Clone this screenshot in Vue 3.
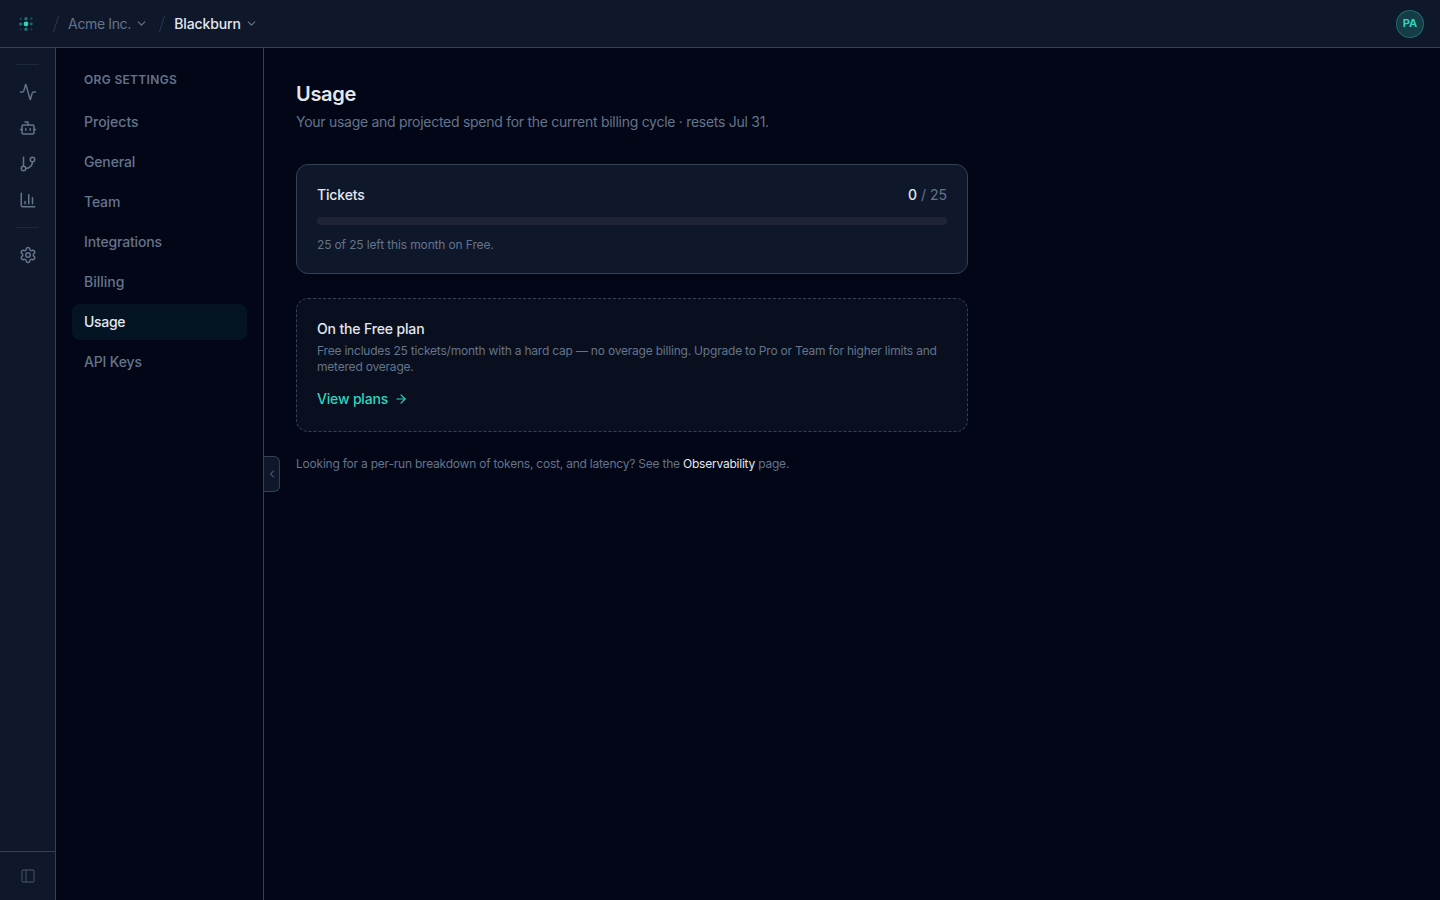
<template>
  <div class="app">
    <header class="topbar">
      <svg class="logo" width="20" height="20" viewBox="0 0 20 20">
        <circle v-for="(dot, i) in dots" :key="i" :cx="dot.x" :cy="dot.y" :r="dot.r" :opacity="dot.o" fill="#2dd4bf" />
      </svg>
      <svg class="slash" width="8" height="18" viewBox="0 0 8 18"><path d="M1.4 17L6.6 1" /></svg>
      <button class="crumb org">
        <span>Acme Inc.</span>
        <svg class="icon" width="13" height="13" viewBox="0 0 24 24"><path d="m6 9 6 6 6-6" /></svg>
      </button>
      <svg class="slash second" width="8" height="18" viewBox="0 0 8 18"><path d="M1.4 17L6.6 1" /></svg>
      <button class="crumb project">
        <span>Blackburn</span>
        <svg class="icon" width="13" height="13" viewBox="0 0 24 24"><path d="m6 9 6 6 6-6" /></svg>
      </button>
      <div class="avatar">PA</div>
    </header>

    <div class="body">
      <nav class="rail">
        <div class="rail-divider"></div>
        <div class="rail-group">
          <a v-for="item in railItems" :key="item.name" class="rail-link" :title="item.name">
            <svg class="icon" width="18" height="18" viewBox="0 0 24 24">
              <path v-for="d in item.paths" :key="d" :d="d" />
            </svg>
          </a>
        </div>
        <div class="rail-divider"></div>
        <a class="rail-link settings" title="Settings">
          <svg class="icon" width="18" height="18" viewBox="0 0 24 24">
            <path d="M9.671 4.136a2.34 2.34 0 0 1 4.659 0 2.34 2.34 0 0 0 3.319 1.915 2.34 2.34 0 0 1 2.33 4.033 2.34 2.34 0 0 0 0 3.831 2.34 2.34 0 0 1-2.33 4.033 2.34 2.34 0 0 0-3.319 1.915 2.34 2.34 0 0 1-4.659 0 2.34 2.34 0 0 0-3.32-1.915 2.34 2.34 0 0 1-2.33-4.033 2.34 2.34 0 0 0 0-3.831A2.34 2.34 0 0 1 6.35 6.051a2.34 2.34 0 0 0 3.319-1.915" />
            <circle cx="12" cy="12" r="3" />
          </svg>
        </a>
        <div class="rail-footer">
          <svg class="icon" width="16" height="16" viewBox="0 0 24 24">
            <rect x="3" y="3" width="18" height="18" rx="2" />
            <path d="M9 3v18" />
          </svg>
        </div>
      </nav>

      <aside class="sidebar">
        <h2>ORG SETTINGS</h2>
        <a
          v-for="link in links"
          :key="link"
          class="side-link"
          :class="{ active: link === current }"
        >{{ link }}</a>
        <button class="collapse">
          <svg class="icon" width="12" height="12" viewBox="0 0 24 24"><path d="m15 18-6-6 6-6" /></svg>
        </button>
      </aside>

      <main class="content">
        <h1>Usage</h1>
        <p class="subtitle">Your usage and projected spend for the current billing cycle · resets Jul 31.</p>

        <section class="card">
          <div class="card-head">
            <span class="card-title">Tickets</span>
            <span class="count"><b>{{ used }}</b> / {{ limit }}</span>
          </div>
          <div class="track">
            <div class="fill" :style="{ width: (used / limit) * 100 + '%' }"></div>
          </div>
          <p class="note">{{ limit - used }} of {{ limit }} left this month on Free.</p>
        </section>

        <section class="card plan">
          <div class="card-title">On the Free plan</div>
          <p class="plan-text">Free includes 25 tickets/month with a hard cap — no overage billing. Upgrade to Pro or Team for higher limits and<br />metered overage.</p>
          <a class="plans-link">
            <span>View plans</span>
            <svg class="icon" width="14" height="14" viewBox="0 0 24 24"><path d="M5 12h14" /><path d="m12 5 7 7-7 7" /></svg>
          </a>
        </section>

        <p class="hint">Looking for a per-run breakdown of tokens, cost, and latency? See the <a>Observability</a> page.</p>
      </main>
    </div>
  </div>
</template>

<script setup>
const used = 0
const limit = 25
const current = 'Usage'

const links = ['Projects', 'General', 'Team', 'Integrations', 'Billing', 'Usage', 'API Keys']

const dots = [
  { x: 4.7, y: 4.7, r: 1.2, o: 0.28 },
  { x: 10, y: 4.7, r: 1.7, o: 0.5 },
  { x: 15.3, y: 4.7, r: 1.2, o: 0.28 },
  { x: 4.7, y: 10, r: 1.6, o: 0.5 },
  { x: 10, y: 10, r: 2.4, o: 1 },
  { x: 15.3, y: 10, r: 1.4, o: 0.45 },
  { x: 4.7, y: 15.3, r: 1.1, o: 0.22 },
  { x: 10, y: 15.3, r: 1.7, o: 0.5 },
  { x: 15.3, y: 15.3, r: 1.1, o: 0.22 },
]

const railItems = [
  {
    name: 'Activity',
    paths: ['M22 12h-2.48a2 2 0 0 0-1.93 1.46l-2.35 8.36a.25.25 0 0 1-.48 0L9.24 2.18a.25.25 0 0 0-.48 0l-2.35 8.36A2 2 0 0 1 4.49 12H2'],
  },
  {
    name: 'Agents',
    paths: [
      'M12 8V4H8',
      'M6 8h12a2 2 0 0 1 2 2v8a2 2 0 0 1-2 2H6a2 2 0 0 1-2-2v-8a2 2 0 0 1 2-2z',
      'M2 14h2',
      'M20 14h2',
      'M15 13v2',
      'M9 13v2',
    ],
  },
  {
    name: 'Branches',
    paths: ['M6 3v12', 'M21 6a3 3 0 1 1-6 0 3 3 0 0 1 6 0z', 'M9 18a3 3 0 1 1-6 0 3 3 0 0 1 6 0z', 'M18 9a9 9 0 0 1-9 9'],
  },
  {
    name: 'Observability',
    paths: ['M3 3v16a2 2 0 0 0 2 2h16', 'M18 17V9', 'M13 17V5', 'M8 17v-3'],
  },
]
</script>

<style>
body {
  margin: 0;
  background: #020617;
}
</style>

<style scoped>
.app {
  display: flex;
  flex-direction: column;
  height: 100vh;
  overflow: hidden;
  background: #020617;
  color: #64748b;
  font-family: Inter, "Liberation Sans", sans-serif;
  font-size: 14px;
  line-height: 20px;
}

h1, h2, p {
  margin: 0;
}

button {
  padding: 0;
  border: 0;
  background: none;
  font: inherit;
  color: inherit;
}

svg {
  display: block;
  flex: none;
}

.icon {
  fill: none;
  stroke: currentColor;
  stroke-width: 2;
  stroke-linecap: round;
  stroke-linejoin: round;
}

.topbar {
  display: flex;
  align-items: center;
  box-sizing: border-box;
  height: 48px;
  flex: none;
  padding: 0 16px;
  border-bottom: 1px solid #334155;
  background: #0f172a;
}

.slash {
  margin-left: 16px;
  fill: none;
  stroke: #2a374a;
  stroke-width: 1;
}

.slash.second {
  margin-left: 10px;
}

.crumb {
  display: flex;
  align-items: center;
  gap: 4px;
  margin-left: 8px;
  white-space: nowrap;
}

.org span {
  width: 63px;
  letter-spacing: -0.37px;
}

.project {
  font-weight: 500;
}

.project span {
  width: 67px;
  color: #e2e8f0;
  letter-spacing: -0.12px;
}

.avatar {
  box-sizing: border-box;
  width: 28px;
  height: 28px;
  margin-left: auto;
  border: 1px solid rgba(45, 212, 191, 0.3);
  border-radius: 50%;
  background: rgba(45, 212, 191, 0.2);
  color: #2dd4bf;
  font-size: 11px;
  font-weight: 700;
  line-height: 25px;
  text-align: center;
}

.body {
  display: flex;
  flex: 1;
  min-height: 0;
}

.rail {
  display: flex;
  flex-direction: column;
  box-sizing: border-box;
  width: 56px;
  flex: none;
  padding-top: 16px;
  border-right: 1px solid #334155;
  background: #0f172a;
}

.rail-divider {
  height: 1px;
  margin: 0 16px;
  background: #1e293b;
}

.rail-group {
  display: flex;
  flex-direction: column;
  padding: 9px 0;
}

.rail-link {
  display: flex;
  align-items: center;
  justify-content: center;
  height: 36px;
  padding-left: 1px;
}

.rail-link.settings {
  margin-top: 9px;
}

.rail-footer {
  display: flex;
  align-items: center;
  justify-content: center;
  height: 48px;
  margin-top: auto;
  padding-left: 1px;
  border-top: 1px solid #334155;
  color: #384559;
}

.sidebar {
  position: relative;
  display: flex;
  flex-direction: column;
  gap: 4px;
  box-sizing: border-box;
  width: 208px;
  flex: none;
  padding: 24px 16px;
  border-right: 1px solid #334155;
}

.sidebar h2 {
  margin-bottom: 12px;
  padding: 0 12px;
  font-size: 12px;
  font-weight: 600;
  line-height: 16px;
  letter-spacing: 0.33px;
}

.side-link {
  height: 36px;
  padding: 0 12px;
  border-radius: 8px;
  font-weight: 500;
  line-height: 36px;
  letter-spacing: -0.16px;
}

.side-link:nth-of-type(1),
.side-link:nth-of-type(5) {
  letter-spacing: 0;
}

.side-link.active {
  background: rgba(45, 212, 191, 0.07);
  color: #e2e8f0;
  letter-spacing: -0.3px;
}

.collapse {
  position: absolute;
  top: 408px;
  right: -17px;
  display: flex;
  align-items: center;
  justify-content: center;
  box-sizing: border-box;
  width: 16px;
  height: 36px;
  border: 1px solid #334155;
  border-left: 0;
  border-radius: 0 6px 6px 0;
  background: #0f172a;
}

.content {
  width: 672px;
  padding: 32px;
}

h1 {
  color: #e2e8f0;
  font-size: 20px;
  font-weight: 600;
  line-height: 28px;
  letter-spacing: -0.3px;
}

.subtitle {
  margin-top: 4px;
  letter-spacing: -0.275px;
  white-space: nowrap;
}

.card {
  box-sizing: border-box;
  height: 110px;
  margin-top: 32px;
  padding: 20px;
  border: 1px solid #334155;
  border-radius: 12px;
  background: #0f172a;
}

.card-head {
  display: flex;
  justify-content: space-between;
}

.card-title {
  color: #e2e8f0;
  font-weight: 500;
  letter-spacing: -0.15px;
}

.count b {
  color: #e2e8f0;
  font-weight: 500;
}

.track {
  height: 8px;
  margin-top: 12px;
  border-radius: 4px;
  background: #1e2335;
  overflow: hidden;
}

.fill {
  height: 100%;
  background: #2dd4bf;
}

.note {
  margin-top: 12px;
  font-size: 12px;
  line-height: 16px;
  letter-spacing: -0.14px;
}

.plan {
  height: 134px;
  margin-top: 24px;
  border-style: dashed;
  background: #090f1e;
}

.plan-text {
  margin-top: 4px;
  font-size: 12px;
  line-height: 16px;
  letter-spacing: -0.205px;
  white-space: nowrap;
}

.plans-link {
  display: flex;
  align-items: center;
  gap: 6px;
  margin-top: 14px;
  color: #2dd4bf;
  font-weight: 500;
  letter-spacing: -0.18px;
}

.hint {
  margin-top: 24px;
  font-size: 12px;
  line-height: 16px;
  letter-spacing: -0.22px;
  white-space: nowrap;
}

.hint a {
  color: #e2e8f0;
}
</style>
